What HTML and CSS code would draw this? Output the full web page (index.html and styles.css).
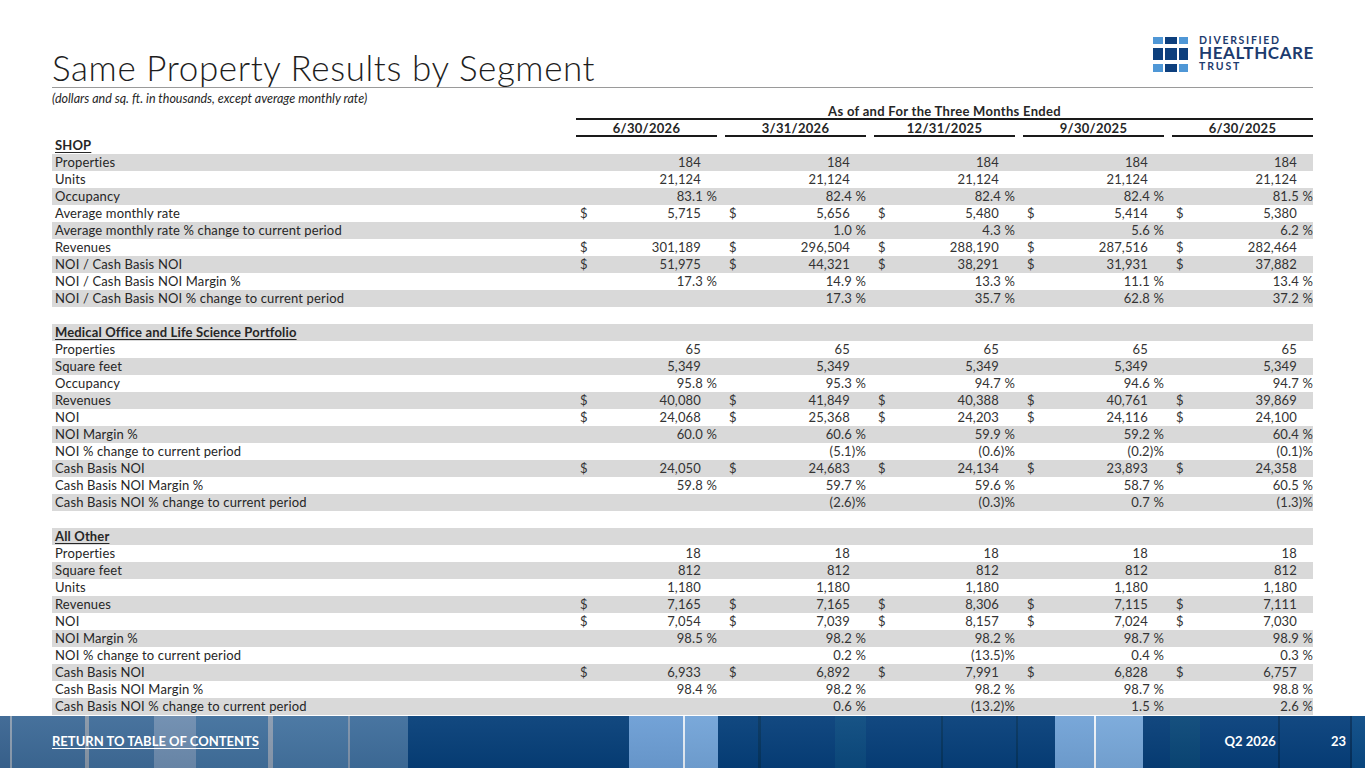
FILE: index.html
```html
<!DOCTYPE html>
<html lang="en">
<head>
<meta charset="utf-8">
<title>Same Property Results by Segment</title>
<link rel="stylesheet" href="styles.css">
</head>
<body>
<div class="slide">
  <header class="top">
    <h1 class="title">Same Property Results by Segment</h1>
    <div class="logo">
      <div class="mark">
        <span class="sq lt"></span><span class="sq dk"></span><span class="sq lt"></span>
        <span class="sq dk"></span><span class="sq dk"></span><span class="sq dk"></span>
        <span class="sq lt"></span><span class="sq dk"></span><span class="sq lt"></span>
      </div>
      <div class="words">
        <span class="w1">DIVERSIFIED</span>
        <span class="w2">HEALTHCARE</span>
        <span class="w3">TRUST</span>
      </div>
    </div>
  </header>
  <p class="subtitle">(dollars and sq. ft. in thousands, except average monthly rate)</p>

  <div class="tbl">
    <div class="r super"><span class="l"></span><span class="span">As of and For the Three Months Ended</span></div>
    <div class="r heads"><span class="l"></span><span class="h"><span>6/30/2026</span></span><span class="h"><span>3/31/2026</span></span><span class="h"><span>12/31/2025</span></span><span class="h"><span>9/30/2025</span></span><span class="h"><span>6/30/2025</span></span></div>

    <div class="r"><span class="l sec">SHOP</span></div>
    <div class="r g"><span class="l">Properties</span><span class="c"><span class="n">184</span></span><span class="c"><span class="n">184</span></span><span class="c"><span class="n">184</span></span><span class="c"><span class="n">184</span></span><span class="c"><span class="n">184</span></span></div>
    <div class="r"><span class="l">Units</span><span class="c"><span class="n">21,124</span></span><span class="c"><span class="n">21,124</span></span><span class="c"><span class="n">21,124</span></span><span class="c"><span class="n">21,124</span></span><span class="c"><span class="n">21,124</span></span></div>
    <div class="r g"><span class="l">Occupancy</span><span class="c"><span class="p">83.1 %</span></span><span class="c"><span class="p">82.4 %</span></span><span class="c"><span class="p">82.4 %</span></span><span class="c"><span class="p">82.4 %</span></span><span class="c"><span class="p">81.5 %</span></span></div>
    <div class="r"><span class="l">Average monthly rate</span><span class="c"><span class="d">$</span><span class="n">5,715</span></span><span class="c"><span class="d">$</span><span class="n">5,656</span></span><span class="c"><span class="d">$</span><span class="n">5,480</span></span><span class="c"><span class="d">$</span><span class="n">5,414</span></span><span class="c"><span class="d">$</span><span class="n">5,380</span></span></div>
    <div class="r g"><span class="l">Average monthly rate % change to current period</span><span class="c"></span><span class="c"><span class="p">1.0 %</span></span><span class="c"><span class="p">4.3 %</span></span><span class="c"><span class="p">5.6 %</span></span><span class="c"><span class="p">6.2 %</span></span></div>
    <div class="r"><span class="l">Revenues</span><span class="c"><span class="d">$</span><span class="n">301,189</span></span><span class="c"><span class="d">$</span><span class="n">296,504</span></span><span class="c"><span class="d">$</span><span class="n">288,190</span></span><span class="c"><span class="d">$</span><span class="n">287,516</span></span><span class="c"><span class="d">$</span><span class="n">282,464</span></span></div>
    <div class="r g"><span class="l">NOI / Cash Basis NOI</span><span class="c"><span class="d">$</span><span class="n">51,975</span></span><span class="c"><span class="d">$</span><span class="n">44,321</span></span><span class="c"><span class="d">$</span><span class="n">38,291</span></span><span class="c"><span class="d">$</span><span class="n">31,931</span></span><span class="c"><span class="d">$</span><span class="n">37,882</span></span></div>
    <div class="r"><span class="l">NOI / Cash Basis NOI Margin %</span><span class="c"><span class="p">17.3 %</span></span><span class="c"><span class="p">14.9 %</span></span><span class="c"><span class="p">13.3 %</span></span><span class="c"><span class="p">11.1 %</span></span><span class="c"><span class="p">13.4 %</span></span></div>
    <div class="r g"><span class="l">NOI / Cash Basis NOI % change to current period</span><span class="c"></span><span class="c"><span class="p">17.3 %</span></span><span class="c"><span class="p">35.7 %</span></span><span class="c"><span class="p">62.8 %</span></span><span class="c"><span class="p">37.2 %</span></span></div>
    <div class="r"><span class="l"></span></div>

    <div class="r g"><span class="l sec">Medical Office and Life Science Portfolio</span></div>
    <div class="r"><span class="l">Properties</span><span class="c"><span class="n">65</span></span><span class="c"><span class="n">65</span></span><span class="c"><span class="n">65</span></span><span class="c"><span class="n">65</span></span><span class="c"><span class="n">65</span></span></div>
    <div class="r g"><span class="l">Square feet</span><span class="c"><span class="n">5,349</span></span><span class="c"><span class="n">5,349</span></span><span class="c"><span class="n">5,349</span></span><span class="c"><span class="n">5,349</span></span><span class="c"><span class="n">5,349</span></span></div>
    <div class="r"><span class="l">Occupancy</span><span class="c"><span class="p">95.8 %</span></span><span class="c"><span class="p">95.3 %</span></span><span class="c"><span class="p">94.7 %</span></span><span class="c"><span class="p">94.6 %</span></span><span class="c"><span class="p">94.7 %</span></span></div>
    <div class="r g"><span class="l">Revenues</span><span class="c"><span class="d">$</span><span class="n">40,080</span></span><span class="c"><span class="d">$</span><span class="n">41,849</span></span><span class="c"><span class="d">$</span><span class="n">40,388</span></span><span class="c"><span class="d">$</span><span class="n">40,761</span></span><span class="c"><span class="d">$</span><span class="n">39,869</span></span></div>
    <div class="r"><span class="l">NOI</span><span class="c"><span class="d">$</span><span class="n">24,068</span></span><span class="c"><span class="d">$</span><span class="n">25,368</span></span><span class="c"><span class="d">$</span><span class="n">24,203</span></span><span class="c"><span class="d">$</span><span class="n">24,116</span></span><span class="c"><span class="d">$</span><span class="n">24,100</span></span></div>
    <div class="r g"><span class="l">NOI Margin %</span><span class="c"><span class="p">60.0 %</span></span><span class="c"><span class="p">60.6 %</span></span><span class="c"><span class="p">59.9 %</span></span><span class="c"><span class="p">59.2 %</span></span><span class="c"><span class="p">60.4 %</span></span></div>
    <div class="r"><span class="l">NOI % change to current period</span><span class="c"></span><span class="c"><span class="p">(5.1)%</span></span><span class="c"><span class="p">(0.6)%</span></span><span class="c"><span class="p">(0.2)%</span></span><span class="c"><span class="p">(0.1)%</span></span></div>
    <div class="r g"><span class="l">Cash Basis NOI</span><span class="c"><span class="d">$</span><span class="n">24,050</span></span><span class="c"><span class="d">$</span><span class="n">24,683</span></span><span class="c"><span class="d">$</span><span class="n">24,134</span></span><span class="c"><span class="d">$</span><span class="n">23,893</span></span><span class="c"><span class="d">$</span><span class="n">24,358</span></span></div>
    <div class="r"><span class="l">Cash Basis NOI Margin %</span><span class="c"><span class="p">59.8 %</span></span><span class="c"><span class="p">59.7 %</span></span><span class="c"><span class="p">59.6 %</span></span><span class="c"><span class="p">58.7 %</span></span><span class="c"><span class="p">60.5 %</span></span></div>
    <div class="r g"><span class="l">Cash Basis NOI % change to current period</span><span class="c"></span><span class="c"><span class="p">(2.6)%</span></span><span class="c"><span class="p">(0.3)%</span></span><span class="c"><span class="p">0.7 %</span></span><span class="c"><span class="p">(1.3)%</span></span></div>
    <div class="r"><span class="l"></span></div>

    <div class="r g"><span class="l sec">All Other</span></div>
    <div class="r"><span class="l">Properties</span><span class="c"><span class="n">18</span></span><span class="c"><span class="n">18</span></span><span class="c"><span class="n">18</span></span><span class="c"><span class="n">18</span></span><span class="c"><span class="n">18</span></span></div>
    <div class="r g"><span class="l">Square feet</span><span class="c"><span class="n">812</span></span><span class="c"><span class="n">812</span></span><span class="c"><span class="n">812</span></span><span class="c"><span class="n">812</span></span><span class="c"><span class="n">812</span></span></div>
    <div class="r"><span class="l">Units</span><span class="c"><span class="n">1,180</span></span><span class="c"><span class="n">1,180</span></span><span class="c"><span class="n">1,180</span></span><span class="c"><span class="n">1,180</span></span><span class="c"><span class="n">1,180</span></span></div>
    <div class="r g"><span class="l">Revenues</span><span class="c"><span class="d">$</span><span class="n">7,165</span></span><span class="c"><span class="d">$</span><span class="n">7,165</span></span><span class="c"><span class="d">$</span><span class="n">8,306</span></span><span class="c"><span class="d">$</span><span class="n">7,115</span></span><span class="c"><span class="d">$</span><span class="n">7,111</span></span></div>
    <div class="r"><span class="l">NOI</span><span class="c"><span class="d">$</span><span class="n">7,054</span></span><span class="c"><span class="d">$</span><span class="n">7,039</span></span><span class="c"><span class="d">$</span><span class="n">8,157</span></span><span class="c"><span class="d">$</span><span class="n">7,024</span></span><span class="c"><span class="d">$</span><span class="n">7,030</span></span></div>
    <div class="r g"><span class="l">NOI Margin %</span><span class="c"><span class="p">98.5 %</span></span><span class="c"><span class="p">98.2 %</span></span><span class="c"><span class="p">98.2 %</span></span><span class="c"><span class="p">98.7 %</span></span><span class="c"><span class="p">98.9 %</span></span></div>
    <div class="r"><span class="l">NOI % change to current period</span><span class="c"></span><span class="c"><span class="p">0.2 %</span></span><span class="c"><span class="p">(13.5)%</span></span><span class="c"><span class="p">0.4 %</span></span><span class="c"><span class="p">0.3 %</span></span></div>
    <div class="r g"><span class="l">Cash Basis NOI</span><span class="c"><span class="d">$</span><span class="n">6,933</span></span><span class="c"><span class="d">$</span><span class="n">6,892</span></span><span class="c"><span class="d">$</span><span class="n">7,991</span></span><span class="c"><span class="d">$</span><span class="n">6,828</span></span><span class="c"><span class="d">$</span><span class="n">6,757</span></span></div>
    <div class="r"><span class="l">Cash Basis NOI Margin %</span><span class="c"><span class="p">98.4 %</span></span><span class="c"><span class="p">98.2 %</span></span><span class="c"><span class="p">98.2 %</span></span><span class="c"><span class="p">98.7 %</span></span><span class="c"><span class="p">98.8 %</span></span></div>
    <div class="r g"><span class="l">Cash Basis NOI % change to current period</span><span class="c"></span><span class="c"><span class="p">0.6 %</span></span><span class="c"><span class="p">(13.2)%</span></span><span class="c"><span class="p">1.5 %</span></span><span class="c"><span class="p">2.6 %</span></span></div>
  </div>

  <footer class="foot">
    <a class="toc" href="#">RETURN TO TABLE OF CONTENTS</a>
    <span class="qtr">Q2 2026</span>
    <span class="pg">23</span>
  </footer>
</div>
</body>
</html>
```

FILE: styles.css
```css
* { box-sizing: border-box; }
html, body { margin: 0; padding: 0; }
body {
  width: 1365px;
  height: 768px;
  overflow: hidden;
  background: #fff;
  font-family: "Lato", "Open Sans", sans-serif;
  color: #262626;
}
.slide {
  width: 1365px;
  height: 768px;
  display: flex;
  flex-direction: column;
}

/* header */
.top {
  margin: 0 52px;
  height: 88px;
  border-bottom: 1px solid #9a9a9a;
  display: flex;
  justify-content: space-between;
}
.title {
  align-self: flex-end;
  margin: 0;
  font-weight: 300;
  font-size: 35px;
  line-height: 40px;
  color: #1e1e1e;
  letter-spacing: 0.6px;
}
.logo {
  align-self: flex-start;
  margin-top: 35px;
  margin-right: -1px;
  display: flex;
  gap: 11px;
}
.mark {
  margin-top: 2px;
  display: grid;
  grid-template-columns: 10px 12px 9px;
  grid-template-rows: 7px 12px 8px;
  column-gap: 2px;
  row-gap: 4px;
  align-self: flex-start;
}
.sq.lt { background: #4f97d6; }
.sq.dk { background: #0d3f7d; }
.words {
  display: flex;
  flex-direction: column;
  color: #1c3b6e;
  font-weight: 700;
}
.w1 { font-size: 10.5px; line-height: 11px; letter-spacing: 1.7px; }
.w2 { font-size: 17px; line-height: 14px; letter-spacing: 0.6px; }
.w3 { font-size: 10.5px; line-height: 11px; letter-spacing: 1.9px; margin-top: 1px; }

.subtitle {
  margin: 5px 52px 0;
  font-size: 12.5px;
  line-height: 12px;
  font-style: italic;
  color: #262626;
}

/* table */
.tbl {
  margin: 0 52px;
  display: flex;
  flex-direction: column;
}
.r {
  display: grid;
  grid-template-columns: 516px repeat(5, 149px);
  height: 17px;
  font-size: 13px;
  line-height: 17px;
  letter-spacing: 0.15px;
  align-items: center;
}
.r.g { background: #d9d9d9; }
.l {
  padding-left: 3px;
  white-space: nowrap;
}
.l.sec {
  font-weight: 700;
  text-decoration: underline;
  text-underline-offset: 2px;
}
.c {
  padding-left: 12px;
  display: flex;
  justify-content: flex-end;
  color: #333;
}
.c .d { margin-right: auto; }
.c .n { padding-right: 16px; }
.c .p { padding-right: 0; }

.r.super {
  height: 15px;
  line-height: 13px;
  align-items: start;
}
.r.super .span {
  grid-column: 2 / 7;
  margin-left: 8px;
  text-align: center;
  font-weight: 700;
  font-size: 13px;
  letter-spacing: 0.3px;
  border-bottom: 2px solid #1a1a1a;
  height: 15px;
}
.r.heads {
  height: 17px;
  align-items: start;
}
.r.heads .h {
  padding-left: 8px;
  display: block;
}
.r.heads .h span {
  display: block;
  text-align: center;
  font-weight: 700;
  font-size: 13px;
  letter-spacing: 0.3px;
  line-height: 14px;
  padding-top: 1px;
  height: 17px;
  border-bottom: 2px solid #1a1a1a;
}

/* footer */
.foot {
  margin-top: auto;
  height: 52px;
  display: flex;
  align-items: center;
  padding-left: 52px;
  padding-bottom: 3px;
  color: #fff;
  font-size: 13px;
  font-weight: 700;
  background:
    linear-gradient(to bottom, rgba(255,255,255,0.05), rgba(0,0,0,0.06)),
    linear-gradient(to right,
      #3a6592 0 10px, #8c9db0 10px 12px, #3d6a97 12px 85px, #8897a8 85px 89px,
      #3f6c99 89px 154px, #6d8caf 154px 196px, #41709d 196px 268px, #8a9bb0 268px 273px,
      #4473a0 273px 348px, #7f93ab 348px 350px, #3f6e9c 350px 408px, #063f79 408px 629px,
      #6c9ed5 629px 683px, #e6eef7 683px 685px, #73a4d8 685px 718px, #053f7a 718px 758px,
      #04345f 758px 761px, #063f7a 761px 835px, #0b4a7f 835px 866px, #063f7a 866px 941px,
      #04345f 941px 943px, #063f7a 943px 1016px, #04345f 1016px 1018px, #063f7a 1018px 1055px,
      #72a3d7 1055px 1094px, #eef3f9 1094px 1096px, #78a8da 1096px 1143px, #063e78 1143px 1170px,
      #0a4778 1170px 1200px, #063f7b 1200px 1278px, #032f5c 1278px 1280px, #063f7b 1280px 1350px,
      #032f5c 1350px 1352px, #0a4a85 1352px);
}
.toc {
  color: #fff;
  text-decoration: underline;
  text-underline-offset: 2px;
}
.qtr { margin-left: auto; }
.pg { margin-left: 55px; margin-right: 19px; }
```
